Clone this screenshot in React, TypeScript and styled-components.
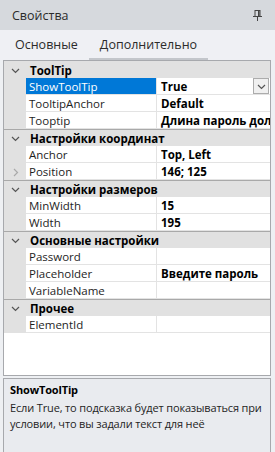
import React from 'react';
import styled, { createGlobalStyle } from 'styled-components';

const GlobalStyle = createGlobalStyle`
  html, body {
    margin: 0;
    padding: 0;
    background: #e6e8ec;
  }
  * {
    box-sizing: border-box;
  }
`;

const Window = styled.div`
  width: 275px;
  height: 452px;
  display: flex;
  flex-direction: column;
  background: #eef0f3;
  font-family: 'Open Sans', 'Noto Sans', sans-serif;
  color: #1e1e1e;
  overflow: hidden;
`;

const TitleBar = styled.div`
  height: 30px;
  flex: none;
  display: flex;
  align-items: center;
  justify-content: space-between;
  padding: 0 12px 0 12px;
  background: #d6d9dd;
  font-size: 12.5px;
  color: #2b2b2b;
`;

const PinButton = styled.div`
  width: 12px;
  height: 12px;
  display: flex;
  align-items: center;
  justify-content: center;
`;

const Tabs = styled.div`
  height: 30px;
  flex: none;
  display: flex;
  align-items: stretch;
  padding-left: 4px;
  background: #eff0f4;
`;

const Tab = styled.div<{ $active?: boolean }>`
  display: flex;
  align-items: center;
  padding: 0 11px 0 11px;
  font-size: 12.5px;
  color: #2b2b2b;
  border-bottom: 2px solid ${p => (p.$active ? '#c3c6cb' : 'transparent')};
`;

const Grid = styled.div`
  flex: 1;
  margin: 0 4px 0 3px;
  border: 1px solid #a7a9ad;
  background: #ffffff;
  display: grid;
  grid-template-columns: 22px 131px 1fr;
  grid-auto-rows: 17px;
  align-content: start;
  font-size: 11.5px;
`;

const Gutter = styled.div<{ $category?: boolean }>`
  background: #e1e1e1;
  display: flex;
  align-items: center;
  justify-content: center;
  border-top: 1px solid ${p => (p.$category ? '#a9a9a9' : 'transparent')};
`;

const CategoryCell = styled.div<{ $first?: boolean }>`
  grid-column: span 2;
  background: #e1e1e1;
  display: flex;
  align-items: center;
  padding-left: 4px;
  font-weight: 700;
  color: #000;
  border-top: 1px solid ${p => (p.$first ? 'transparent' : '#a9a9a9')};
  white-space: nowrap;
  overflow: hidden;
`;

const NameCell = styled.div<{ $selected?: boolean }>`
  display: flex;
  align-items: center;
  padding-left: 3px;
  background: ${p => (p.$selected ? '#0078d7' : '#ffffff')};
  color: ${p => (p.$selected ? '#ffffff' : '#1e1e1e')};
  border-right: 1px solid #e3e3e3;
  border-bottom: 1px solid #e3e3e3;
  white-space: nowrap;
  overflow: hidden;
`;

const ValueCell = styled.div`
  position: relative;
  display: flex;
  align-items: center;
  padding-left: 4px;
  font-weight: 700;
  color: #000;
  border-bottom: 1px solid #e3e3e3;
  white-space: nowrap;
  overflow: hidden;
`;

const DropButton = styled.div`
  position: absolute;
  right: 1px;
  top: 0;
  width: 16px;
  height: 16px;
  border: 1px solid #acacac;
  background: #f0f0f0;
  display: flex;
  align-items: center;
  justify-content: center;
`;

const Description = styled.div`
  height: 74px;
  flex: none;
  margin: 2px 4px 0 3px;
  border: 1px solid #a7a9ad;
  border-bottom: none;
  background: #e9ebef;
  padding: 3px 4px 3px 6px;
  font-size: 11px;
  letter-spacing: -0.15px;
  color: #1e1e1e;
  line-height: 16px;
`;

const DescTitle = styled.div`
  font-weight: 700;
  color: #000;
  margin-bottom: 2px;
`;

const Chevron = ({ open, muted }: { open: boolean; muted?: boolean }) => (
  <svg width="9" height="9" viewBox="0 0 9 9">
    <path
      d={open ? 'M1 3 L4.5 6.5 L8 3' : 'M3 1 L6.5 4.5 L3 8'}
      fill="none"
      stroke={muted ? '#a9a9a9' : '#555555'}
      strokeWidth="1.2"
    />
  </svg>
);

const PinIcon = () => (
  <svg width="9" height="11" viewBox="0 0 9 11">
    <rect x="2" y="0.5" width="5" height="6" fill="none" stroke="#444" strokeWidth="1" />
    <rect x="5" y="1" width="1.5" height="5" fill="#444" />
    <rect x="0" y="6" width="9" height="1" fill="#444" />
    <rect x="4" y="7" width="1" height="4" fill="#444" />
  </svg>
);

type Prop = { name: string; value?: string; selected?: boolean; expandable?: boolean; dropdown?: boolean };
type Category = { title: string; props: Prop[] };

const categories: Category[] = [
  {
    title: 'ToolTip',
    props: [
      { name: 'ShowToolTip', value: 'True', selected: true, dropdown: true },
      { name: 'TooltipAnchor', value: 'Default' },
      { name: 'Tooptip', value: 'Длина пароль дол' },
    ],
  },
  {
    title: 'Настройки координат',
    props: [
      { name: 'Anchor', value: 'Top, Left' },
      { name: 'Position', value: '146; 125', expandable: true },
    ],
  },
  {
    title: 'Настройки размеров',
    props: [
      { name: 'MinWidth', value: '15' },
      { name: 'Width', value: '195' },
    ],
  },
  {
    title: 'Основные настройки',
    props: [
      { name: 'Password' },
      { name: 'Placeholder', value: 'Введите пароль' },
      { name: 'VariableName' },
    ],
  },
  {
    title: 'Прочее',
    props: [{ name: 'ElementId' }],
  },
];

export default function App() {
  return (
    <>
      <GlobalStyle />
      <Window>
        <TitleBar>
          <span>Свойства</span>
          <PinButton>
            <PinIcon />
          </PinButton>
        </TitleBar>
        <Tabs>
          <Tab>Основные</Tab>
          <Tab $active>Дополнительно</Tab>
        </Tabs>
        <Grid>
          {categories.map((cat, ci) => (
            <React.Fragment key={cat.title}>
              <Gutter $category={ci > 0}>
                <Chevron open />
              </Gutter>
              <CategoryCell $first={ci === 0}>{cat.title}</CategoryCell>
              {cat.props.map(p => (
                <React.Fragment key={p.name}>
                  <Gutter>{p.expandable && <Chevron open={false} muted />}</Gutter>
                  <NameCell $selected={p.selected}>{p.name}</NameCell>
                  <ValueCell>
                    {p.value}
                    {p.dropdown && (
                      <DropButton>
                        <Chevron open />
                      </DropButton>
                    )}
                  </ValueCell>
                </React.Fragment>
              ))}
            </React.Fragment>
          ))}
        </Grid>
        <Description>
          <DescTitle>ShowToolTip</DescTitle>
          Если True, то подсказка будет показываться при условии, что вы задали текст для неё
        </Description>
      </Window>
    </>
  );
}
